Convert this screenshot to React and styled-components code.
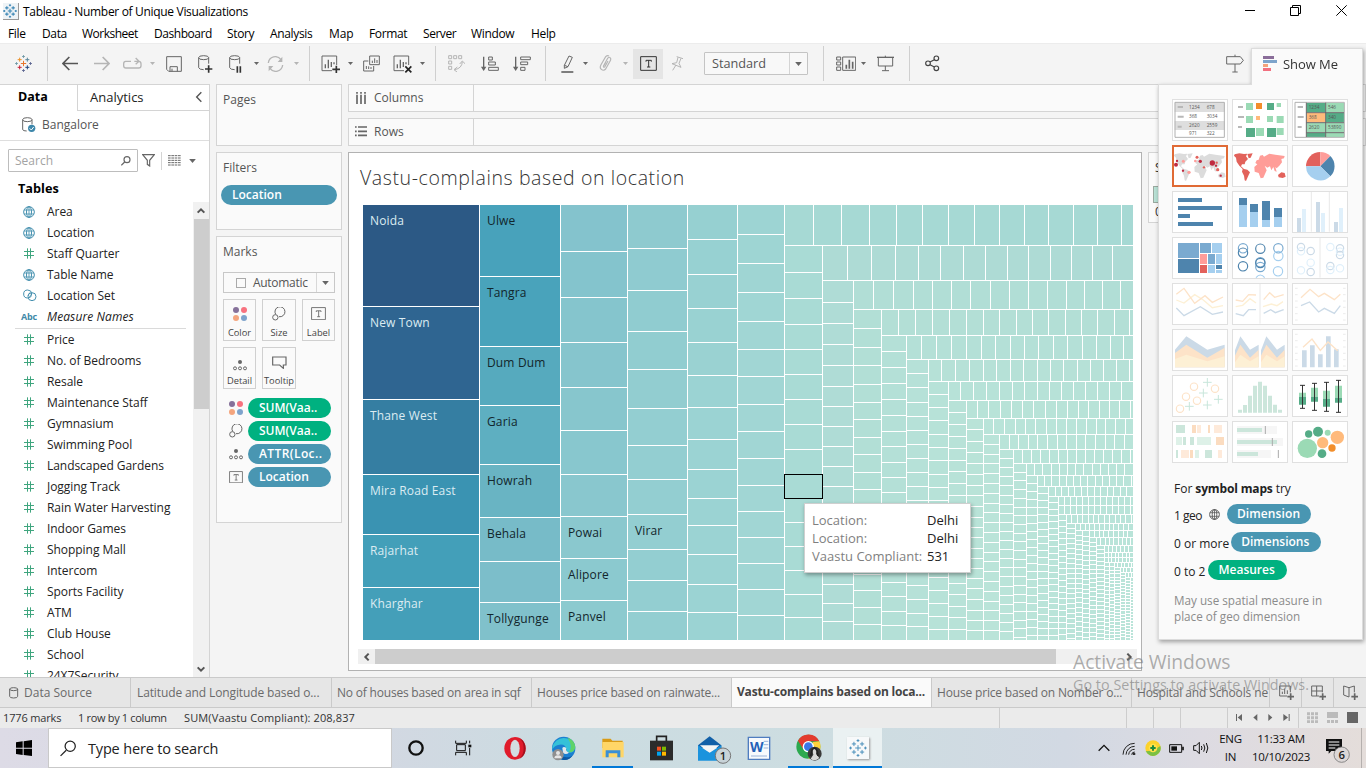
import React from "react";
import styled, { createGlobalStyle, css } from "styled-components";

const Global = createGlobalStyle`
  * { box-sizing: border-box; }
  body { margin: 0; overflow: hidden; background: #fff; }
  #root { width: 1366px; height: 768px; }
  svg { display: block; flex: none; }
`;

const Screen = styled.div`
  position: relative;
  width: 1366px;
  height: 768px;
  display: flex;
  flex-direction: column;
  overflow: hidden;
  background: #f4f4f4;
  font-family: "Open Sans", "Noto Sans", sans-serif;
  font-size: 12px;
  color: #333;
  white-space: nowrap;
`;

/* ---------- generic drawing: coordinates are thirds of a pixel ---------- */
const Art = ({ w, h, children, ...rest }) => (
  <svg width={w} height={h} viewBox={`0 0 ${w * 3} ${h * 3}`} fill="none" {...rest}>
    {children}
  </svg>
);

/* ---------- title bar and menu ---------- */
const TitleBar = styled.header`
  height: 24px;
  display: flex;
  align-items: center;
  padding: 0 0 2px 3px;
  background: #fff;
  color: #000;
`;
const TitleText = styled.span`
  margin-left: 4px;
  flex: 1;
  font-size: 12px;
  letter-spacing: -0.32px;
`;
const WindowButtons = styled.div`
  display: flex;
  gap: 35px;
  align-items: center;
  padding: 0 19px 2px 0;
`;
const MenuBar = styled.nav`
  height: 19px;
  display: flex;
  align-items: center;
  background: #fff;
  color: #000;
  padding-left: 8px;
`;
const MenuItem = styled.span`
  width: ${(p) => p.$w}px;
  font-size: 12px;
  letter-spacing: ${(p) => p.$ls || -0.35}px;
`;

/* ---------- toolbar ---------- */
const Toolbar = styled.div`
  height: 41px;
  display: flex;
  align-items: center;
  padding-bottom: 1px;
  background: #f4f4f4;
  border-top: 1px solid #ececec;
`;
const Tool = styled.span`
  width: ${(p) => p.$w}px;
  margin-left: ${(p) => p.$gap}px;
  flex: none;
  display: flex;
  justify-content: center;
`;
const Divider = styled.span`
  width: 1px;
  height: 35px;
  margin-left: ${(p) => p.$gap}px;
  background: #cfcfcf;
`;
const ActiveTool = styled(Tool)`
  height: 30px;
  align-items: center;
  background: #e5e5e5;
`;
const FitSelect = styled.div`
  width: 104px;
  height: 23px;
  margin-left: 20px;
  display: flex;
  align-items: center;
  border: 1px solid #c4c4c4;
  border-radius: 1px;
  background: #f8f8f8;
  color: #555;
  font-size: 12.7px;
`;
const FitLabel = styled.span`
  flex: 1;
  padding: 0 0 1px 7px;
`;
const FitArrow = styled.span`
  width: 18px;
  height: 21px;
  border-left: 1px solid #d4d4d4;
  display: flex;
  align-items: center;
  justify-content: center;
`;
const CaretBox = styled.span`
  margin-left: ${(p) => p.$gap || 0}px;
  flex: none;
`;
const Caret = ({ gap, s = 5, c = "#666" }) => (
  <CaretBox $gap={gap}>
    <svg width={s} height={Math.ceil(s / 2)} viewBox="0 0 10 6">
      <path d="M0 0H10L5 6Z" fill={c} />
    </svg>
  </CaretBox>
);

/* ---------- body ---------- */
const Body = styled.main`
  height: 593px;
  display: flex;
`;
const DataPane = styled.section`
  width: 210px;
  display: flex;
  flex-direction: column;
  background: #fff;
  border-right: 1px solid #d4d4d4;
  border-top: 1px solid #d4d4d4;
`;
const PaneTabs = styled.div`
  height: 26px;
  display: flex;
  color: #222;
`;
const DataTab = styled.div`
  width: 77px;
  padding: 3px 0 0 18px;
  font-weight: 700;
  font-size: 12.5px;
  color: #000;
`;
const AnalyticsTab = styled.div`
  flex: 1;
  display: flex;
  justify-content: space-between;
  padding: 3px 3px 0 12px;
  border-left: 1px solid #d4d4d4;
  border-bottom: 1px solid #d4d4d4;
  font-size: 13px;
  line-height: 18px;
`;
const TabArrow = styled.span`
  padding-top: 2px;
`;
const SourceRow = styled.div`
  height: 30px;
  display: flex;
  align-items: center;
  gap: 6px;
  padding: 0 0 2px 22px;
  border-bottom: 1px solid #dedede;
  color: #555;
`;
const SearchRow = styled.div`
  display: flex;
  align-items: center;
  height: 23px;
  margin: 8px 0 0 8px;
`;
const SearchField = styled.div`
  width: 130px;
  height: 23px;
  display: flex;
  align-items: center;
  justify-content: space-between;
  padding: 0 6px;
  border: 1px solid #bdbdbd;
  border-radius: 1px;
  color: #a3a3a3;
`;
const SmallDivider = styled.span`
  width: 1px;
  height: 18px;
  margin: 0 6px;
  background: #d4d4d4;
`;
const TablesTitle = styled.h3`
  margin: 7px 0 4px 18px;
  height: 19px;
  line-height: 19px;
  font-size: 12.7px;
  font-weight: 700;
  color: #000;
`;
const FieldArea = styled.div`
  flex: 1;
  min-height: 0;
  display: flex;
`;
const FieldList = styled.div`
  flex: 1;
  overflow: hidden;
`;
const FieldRow = styled.div`
  height: 21px;
  display: flex;
  align-items: center;
  padding-bottom: 2px;
  color: #222;
  font-style: ${(p) => (p.$italic ? "italic" : "normal")};
  letter-spacing: ${(p) => (p.$italic ? 0.1 : -0.05)}px;
`;
const FieldIcon = styled.span`
  width: 24px;
  margin-left: 23px;
  display: flex;
  flex: none;
  align-items: center;
`;
const AbcIcon = styled.b`
  margin-left: -2px;
  font-size: 9px;
  font-style: normal;
  color: #4189a8;
  letter-spacing: -0.2px;
`;
const FieldRule = styled.div`
  height: 1px;
  margin: 0 7px 1px 15px;
  background: #dadada;
`;
const VScroll = styled.div`
  width: 16px;
  display: flex;
  flex-direction: column;
  align-items: center;
  background: #f1f1f1;
`;
const ScrollButton = styled.span`
  width: 17px;
  height: 17px;
  display: flex;
  align-items: center;
  justify-content: center;
`;
const VThumb = styled.div`
  width: 15px;
  height: 190px;
  background: #cdcdcd;
`;
const Spacer = styled.div`
  flex: 1;
`;

/* ---------- cards ---------- */
const CardColumn = styled.section`
  width: 126px;
  margin-left: 6px;
  display: flex;
  flex-direction: column;
  gap: 6px;
`;
const Card = styled.div`
  height: ${(p) => p.$h}px;
  border: 1px solid #d4d4d4;
  background: #fafafa;
`;
const CardTitle = styled.div`
  height: 32px;
  padding: 6px 0 0 6px;
  line-height: 18px;
  color: #555;
`;
const Pill = styled.span`
  height: 20px;
  width: ${(p) => p.$w}px;
  padding-left: ${(p) => p.$pl || 11}px;
  padding-bottom: 1px;
  display: inline-flex;
  align-items: center;
  border-radius: 10px;
  background: ${(p) => (p.$green ? "#00b180" : "#4996b2")};
  color: #fff;
  font-weight: 600;
  font-size: 12px;
  letter-spacing: ${(p) => p.$ls || 0}px;
  flex: none;
`;
const FilterPill = styled(Pill)`
  margin-left: 4px;
`;
const MarkType = styled.div`
  height: 21px;
  width: 112px;
  margin: 3px 0 6px 6px;
  display: flex;
  align-items: center;
  border: 1px solid #c8c8c8;
  color: #555;
  letter-spacing: -0.3px;
`;
const MarkSquare = styled.i`
  width: 10px;
  height: 10px;
  margin: 0 7px 0 12px;
  border: 1px solid #aaa;
`;
const MarkArrow = styled.span`
  width: 18px;
  height: 19px;
  display: flex;
  align-items: center;
  justify-content: center;
  border-left: 1px solid #d8d8d8;
`;
const MarkGrid = styled.div`
  display: grid;
  grid-template-columns: 33px 34px 33px;
  grid-auto-rows: 42px;
  gap: 6px 6px;
  margin-left: 6px;
`;
const MarkButton = styled.div`
  border: 1px solid #d0d0d0;
  display: flex;
  flex-direction: column;
  align-items: center;
  justify-content: space-between;
  padding: 7px 0 1px;
  font-size: 9.3px;
  line-height: 13px;
  color: #444;
`;
const PillList = styled.div`
  display: flex;
  flex-direction: column;
  gap: 3px;
  margin: 9px 0 0 12px;
`;
const PillRow = styled.div`
  display: flex;
  align-items: center;
`;
const PillIcon = styled.span`
  width: 19px;
  display: flex;
  align-items: center;
`;

/* ---------- worksheet ---------- */
const Work = styled.section`
  flex: 1;
  min-width: 0;
  margin-left: 6px;
  display: flex;
  flex-direction: column;
  gap: 6px;
`;
const Shelf = styled.div`
  height: 28px;
  display: flex;
  border: 1px solid #d4d4d4;
  background: #fafafa;
  color: #555;
`;
const ShelfName = styled.div`
  width: 125px;
  display: flex;
  align-items: center;
  gap: 7px;
  padding: 0 0 1px ${(p) => p.$pl}px;
  border-right: 1px solid #d4d4d4;
`;
const SheetRow = styled.div`
  display: flex;
  gap: 6px;
`;
const Sheet = styled.div`
  position: relative;
  width: 794px;
  height: 519px;
  flex: none;
  display: flex;
  flex-direction: column;
  border: 1px solid #b2b2b2;
  background: #fff;
`;
const SheetTitle = styled.h1`
  margin: 0;
  height: 52px;
  padding-left: 11px;
  line-height: 49px;
  font-size: 19.5px;
  font-weight: 300;
  letter-spacing: 0.6px;
  color: #333;
`;
const ChartBox = styled.div`
  margin-left: 14px;
`;
const HScroll = styled.div`
  width: 779px;
  height: 15px;
  margin: 9px 0 0 9px;
  display: flex;
  align-items: center;
  background: #f0f0f0;
`;
const HThumb = styled.div`
  width: 681px;
  height: 15px;
  background: #cdcdcd;
`;
const HintBox = styled.div`
  position: absolute;
  left: 455px;
  top: 350px;
  width: 167px;
  height: 70px;
  padding: 8px 0 0 7px;
  display: grid;
  grid-template-columns: 115px 1fr;
  grid-auto-rows: 18px;
  line-height: 17px;
  background: #fff;
  border: 1px solid #cfcfcf;
  box-shadow: 1px 2px 4px rgba(0, 0, 0, 0.35);
  font-size: 13px;
  color: #7f7f7f;
`;
const HintValue = styled.span`
  color: #222;
  font-weight: 500;
`;
const Legend = styled.div`
  width: 120px;
  height: 71px;
  border: 1px solid #d4d4d4;
  background: #fafafa;
  padding: 6px 0 0 6px;
`;
const LegendRamp = styled.div`
  height: 17px;
  margin: 10px 0 0 -2px;
  background: #b9e2d6;
  border: 1px solid #9aa99f;
`;

/* ---------- Show Me ---------- */
const ShowMe = styled.aside`
  position: absolute;
  left: 1158px;
  top: 48px;
  width: 205px;
  display: flex;
  flex-direction: column;
  align-items: flex-end;
  filter: drop-shadow(1px 2px 2px rgba(0, 0, 0, 0.35));
`;
const ShowMeTab = styled.div`
  width: 112px;
  height: 37px;
  display: flex;
  align-items: center;
  gap: 5px;
  padding: 0 0 7px 11px;
  margin-bottom: -1px;
  border: 1px solid #dcdcdc;
  border-bottom: 0;
  background: #fafafa;
  font-size: 13px;
  color: #333;
  letter-spacing: -0.05px;
  z-index: 1;
`;
const ShowMeBody = styled.div`
  width: 205px;
  height: 556px;
  padding: 14px 0 0 13px;
  border: 1px solid #dcdcdc;
  background: #fafafa;
`;
const ThumbGrid = styled.div`
  display: grid;
  grid-template-columns: repeat(3, 56px);
  grid-auto-rows: 42px;
  gap: 4px;
`;
const Thumb = styled.div`
  background: #fff;
  border: ${(p) => (p.$on ? "2px solid #e06a35" : "1px solid #e0e0e0")};
  overflow: hidden;
  > svg { margin: ${(p) => (p.$on ? "-2px" : "-1px")}; }
`;
const Needs = styled.div`
  display: flex;
  flex-direction: column;
  margin: 17px 0 0 2px;
  color: #222;
`;
const NeedsLine = styled.div`
  height: ${(p) => p.$h || 28}px;
  display: flex;
  align-items: center;
  gap: ${(p) => p.$gap || 0}px;
  letter-spacing: ${(p) => p.$ls || 0}px;
  b { margin: 0 3px; font-weight: 700; letter-spacing: -0.15px; }
`;
const NeedsText = styled.span`
  padding-top: 3px;
`;
const NeedsNote = styled.p`
  margin: 5px 0 0;
  line-height: 16px;
  font-size: 11.7px;
  color: #8b8b8b;
`;

/* ---------- sheet tabs and status ---------- */
const SheetTabs = styled.div`
  height: 31px;
  display: flex;
  border-top: 1px solid #cacaca;
  border-bottom: 1px solid #cacaca;
  background: #e6e6e6;
  color: #6a6a6a;
`;
const SheetTab = styled.div`
  width: ${(p) => p.$w}px;
  flex: none;
  overflow: hidden;
  display: flex;
  align-items: center;
  gap: 5px;
  padding-left: ${(p) => p.$pl || 6}px;
  border-right: 1px solid #cacaca;
  letter-spacing: ${(p) => (p.$ls === undefined ? -0.12 : p.$ls)}px;
  ${(p) =>
    p.$on &&
    css`
      background: #fafafa;
      color: #444;
      font-weight: 700;
      padding-bottom: 2px;
    `}
`;
const StatusBar = styled.div`
  height: 20px;
  display: flex;
  align-items: center;
  padding-left: 3px;
  background: #ebebeb;
  color: #333;
  font-size: 11px;
`;
const StatusText = styled.span`
  width: ${(p) => p.$w}px;
  padding-bottom: 2px;
  letter-spacing: ${(p) => p.$ls || 0}px;
`;
const StatusCell = styled.span`
  width: ${(p) => p.$w}px;
  height: 20px;
  display: flex;
  align-items: center;
  justify-content: ${(p) => p.$j || "flex-start"};
  padding: 0 ${(p) => p.$p || 0}px 1px;
  border-left: 1px solid #cdcdcd;
`;

/* ---------- taskbar ---------- */
const Taskbar = styled.footer`
  height: 40px;
  display: flex;
  background: linear-gradient(90deg, #dddbe6 0%, #d2d8e2 28%, #cbdce1 42%, #cddde1 62%, #d2d9e3 78%, #dddbe2 88%, #e4ddda 100%);
  color: #111;
`;
const StartButton = styled.div`
  width: 48px;
  display: flex;
  align-items: center;
  justify-content: center;
`;
const TaskSearch = styled.div`
  width: 344px;
  display: flex;
  align-items: center;
  gap: 11px;
  padding-left: 11px;
  background: #fff;
  border: 1px solid #c9c9c9;
  font-size: 14.5px;
  letter-spacing: -0.17px;
  color: #222;
`;
const AppButton = styled.div`
  width: 49px;
  display: flex;
  align-items: center;
  justify-content: center;
  padding-right: ${(p) => p.$shift || 0}px;
  background: ${(p) => (p.$active ? "#eaf1f2" : "transparent")};
  box-shadow: ${(p) => (p.$open ? "inset 0 -2px 0 #0078d7" : "none")};
`;
const OpenApp = styled(AppButton)`
  width: 41px;
  margin: 0 4px;
`;
const Tray = styled.div`
  margin-left: auto;
  display: flex;
  align-items: center;
`;
const TrayItem = styled.span`
  width: ${(p) => p.$w}px;
  display: flex;
  justify-content: center;
`;
const TrayText = styled.div`
  width: ${(p) => p.$w}px;
  padding-bottom: 1px;
  text-align: center;
  font-size: 11.5px;
  line-height: 18px;
  letter-spacing: ${(p) => p.$ls || -0.3}px;
`;
const PeekEdge = styled.span`
  width: 5px;
  height: 40px;
  border-left: 1px solid #b5b0ae;
`;

const Watermark = styled.div`
  position: absolute;
  left: 1073px;
  top: 649px;
  color: rgba(120, 120, 120, 0.6);
  font-size: 14.3px;
  line-height: 20px;
  letter-spacing: 0.05px;
  pointer-events: none;
`;
const WatermarkTitle = styled.div`
  font-size: 19.3px;
  line-height: 26px;
  letter-spacing: -0.05px;
`;

/* ---------- icons ---------- */
const G = "#666";
const L = "#b5b5b5";

const plus = (x, y, r) => `M${x - r} ${y}h${2 * r}M${x} ${y - r}v${2 * r}`;

const TableauMark = ({ size, colors, sw = 3 }) => (
  <svg width={size} height={size} viewBox="0 0 51 51" fill="none" strokeWidth={sw}>
    <path d={plus(25.5, 25.5, 8)} stroke={colors[0]} />
    <path d={plus(14, 14, 6)} stroke={colors[1]} />
    <path d={plus(37, 14, 6)} stroke={colors[2]} />
    <path d={plus(14, 37, 6)} stroke={colors[3]} />
    <path d={plus(37, 37, 6)} stroke={colors[4]} />
    <path d={plus(25.5, 4.5, 4)} stroke={colors[5]} />
    <path d={plus(25.5, 46.5, 4)} stroke={colors[6]} />
    <path d={plus(4.5, 25.5, 4)} stroke={colors[5]} />
    <path d={plus(46.5, 25.5, 4)} stroke={colors[6]} />
  </svg>
);
const BLUES = Array(7).fill("#3b86b5");
const MULTI = ["#e8762c", "#eb9129", "#5b879b", "#c72037", "#1f447e", "#7099a6", "#5c6692"];

const AppIcon = styled.span`
  padding: 1px 1px 1px 0;
  background: #eef3f6;
  border-right: 1px solid #999;
  border-bottom: 1px solid #999;
`;

const Arrow = ({ c, flip }) => (
  <Art w={16} h={15} stroke={c} strokeWidth="5" transform={flip ? "scale(-1,1)" : undefined}>
    <path d="M3 22.500H48M22 3L3 22.500L22 42" />
  </Art>
);
const Replay = () => (
  <Art w={19} h={14} stroke={L} strokeWidth="4">
    <path d="M24 13H8Q2 13 2 20V26Q2 33 9 33H47Q54 33 54 26V20Q54 13 47 13H34M38 3L48 13L38 22" />
  </Art>
);
const Save = () => (
  <Art w={16} h={16} stroke={G} strokeWidth="3">
    <path d="M2 2H46V46H8L2 40ZM12 46V32H34V46M18 38V46" />
  </Art>
);
const CYL = "M2 8Q2 2 17 2T32 8Q32 14 17 14T2 8V38Q4 44 17 44M32 8V26";
const AddData = () => (
  <Art w={15} h={18} stroke={G} strokeWidth="3">
    <path d={CYL} />
    <path d="M21 42H43M32 31V53" stroke="#333" strokeWidth="5" />
  </Art>
);
const PauseData = () => (
  <Art w={14} h={18} stroke={G} strokeWidth="3">
    <path d={CYL} />
    <path d="M25 34V53M34 34V53" stroke="#333" strokeWidth="5" />
  </Art>
);
const Refresh = () => (
  <Art w={17} h={16} stroke={L} strokeWidth="4">
    <path d="M4 21A21 21 0 0 1 42 11M47 27A21 21 0 0 1 9 37" />
    <path d="M46 2V18H32ZM5 46V30H19Z" fill={L} stroke="none" />
  </Art>
);
const NewSheet = ({ del }) => (
  <Art w={19} h={19} stroke={G} strokeWidth="3" transform="translate(0,1)">
    <path d="M47 30V3H3V47H33" />
    <path d="M13 40V28M22 40V14M31 36V21M39 28V22" strokeWidth="4" />
    {del ? (
      <path d="M37 34L55 52M55 34L37 52" stroke="#222" strokeWidth="5" />
    ) : (
      <path d="M34 43H57M46 32V54" stroke="#333" strokeWidth="5" />
    )}
  </Art>
);
const Duplicate = () => (
  <Art w={17} h={17} stroke={G} strokeWidth="3">
    <path d="M20 3H49V29H20ZM16 18H2V48H32V33" />
    <path d="M28 24V17M35 24V10M42 24V15M10 42V33M17 42V34M24 42V36" />
  </Art>
);
const Swap = () => (
  <Art w={18} h={17} stroke={L} strokeWidth="3">
    <path d="M2 2h9v9h-9zM17 2h9v9h-9zM32 2h9v9h-9zM2 18h9v9h-9zM2 34h9v9h-9zM20 44Q42 40 43 20M28 36L18 44L27 51M35 27L43 18L51 26" />
  </Art>
);
const SortIcon = ({ desc }) => (
  <Art w={18} h={16} stroke={G} strokeWidth="3">
    <path d="M8 2V38" strokeWidth="4" />
    <path d="M0 32H16L8 45Z" fill={G} stroke="none" />
    {desc ? (
      <path d="M23 3H52V11H23ZM23 18H44V26H23ZM23 34H36V43H23Z" />
    ) : (
      <path d="M23 3H34V12H23ZM23 18H43V27H23ZM23 34H52V43H23Z" />
    )}
  </Art>
);
const Highlighter = () => (
  <Art w={14} h={18} stroke={G} strokeWidth="3">
    <path d="M10 31L24 3L34 7L21 35L10 40ZM10 31L21 35" />
    <path d="M1 51H37" strokeWidth="5" />
  </Art>
);
const Clip = () => (
  <Art w={13} h={17} stroke={L} strokeWidth="3.500">
    <path d="M13 34L26 10Q30 4 34 9Q37 12 33 19L20 42Q14 49 7 43Q1 38 6 29L20 5Q25 0 30 3M20 22L13 34Q13 38 17 36L27 18" />
  </Art>
);
const TextBox = ({ s = 17, c = "#333" }) => (
  <svg width={s} height={(s * 15) / 17} viewBox="0 0 51 45" fill="none" stroke={c} strokeWidth="3">
    <path d="M2 2H49V43H2ZM18 17V13H34V17M26 13V33M21 33H31" />
  </svg>
);
const Pin = () => (
  <Art w={13} h={16} stroke={L} strokeWidth="3">
    <path d="M17 2L36 8M21 4L17 20L3 23L30 34L24 22L30 7M15 27L5 43" />
  </Art>
);
const FitChart = () => (
  <Art w={20} h={16} stroke={G} strokeWidth="3">
    <path d="M2 3h12v9H2zM2 18h12v9H2zM2 33h12v10H2zM20 3H59V43H20Z" />
    <path d="M31 38V26M40 38V11M50 38V17" strokeWidth="5" />
  </Art>
);
const Present = () => (
  <Art w={17} h={17} stroke={G} strokeWidth="3">
    <path d="M0 7H51" strokeWidth="4" />
    <path d="M4 8V33H47V8M25 2V6M25 33V47M15 47H36" />
  </Art>
);
const Share = () => (
  <Art w={15} h={17} stroke="#444" strokeWidth="3.500">
    <circle cx="9" cy="25" r="7" />
    <circle cx="34" cy="10" r="7" />
    <circle cx="34" cy="40" r="7" />
    <path d="M15 21L28 14M15 29L28 36" />
  </Art>
);
const Sign = () => (
  <Art w={18} h={19} stroke={G} strokeWidth="3">
    <path d="M2 8H43L52 19L43 30H2ZM27 8V2M27 30V54M19 54H35" />
  </Art>
);
const ShowMeLogo = () => (
  <Art w={15} h={15}>
    <path fill="#8a6d99" d="M0 0h33v9H0z" />
    <path fill="#7da4cb" d="M0 12h42v9H0z" />
    <path fill="#f3a27a" d="M0 24h15v9H0z" />
    <path fill="#f2707f" d="M0 36h24v9H0z" />
  </Art>
);
const Globe = ({ c = "#4590af", s = 12 }) => (
  <svg width={s} height={s} viewBox="0 0 36 36" fill="none" stroke={c} strokeWidth="3">
    <circle cx="18" cy="18" r="16" />
    <ellipse cx="18" cy="18" rx="7.500" ry="16" />
    <path d="M18 2V34M3 12H33M3 24H33" strokeWidth="2.500" />
  </svg>
);
const Hash = () => (
  <Art w={11} h={11} stroke="#3fa57e" strokeWidth="3">
    <path d="M13.500 1V32M22.500 1V32M3 10.500H33M3 22.500H33" />
  </Art>
);
const SetIcon = () => (
  <Art w={14} h={13} stroke="#4590af" strokeWidth="3">
    <circle cx="14" cy="15" r="12" />
    <circle cx="27" cy="23" r="12" />
    <path d="M18 25L27 13M14 20L21 10" strokeWidth="2" />
  </Art>
);
const SourceIcon = () => (
  <Art w={14} h={16} stroke={G} strokeWidth="3">
    <path d="M2 8Q2 2 16 2T30 8Q30 14 16 14T2 8V38Q4 42 14 42M30 8V22" />
    <circle cx="29" cy="34" r="11" fill="#3d87ab" stroke="none" />
    <path d="M23 34L28 39L35 30" stroke="#fff" />
  </Art>
);
const Lens = ({ s = 10, c = G, w = 3.5 }) => (
  <svg width={s} height={s} viewBox="0 0 30 30" fill="none" stroke={c} strokeWidth={w}>
    <circle cx="18" cy="11" r="9" />
    <path d="M11 18L1 28" />
  </svg>
);
const Funnel = () => (
  <Art w={13} h={13} stroke={G} strokeWidth="3.500">
    <path d="M2 2H37L23 19V36L16 31V19Z" />
  </Art>
);
const Rows4 = () => (
  <Art w={13} h={11} stroke={G} strokeWidth="3" strokeDasharray="8 2">
    <path d="M0 2H38M0 9H38M0 16H38M0 23H38M0 30H38" />
  </Art>
);
const Chevron = ({ d, c = "#555", w = 12, s = 3 }) => (
  <svg width={w} height={w} viewBox="0 0 12 12" fill="none" stroke={c} strokeWidth={s}>
    <path
      d={{ up: "M2 8L6 4L10 8", down: "M2 4L6 8L10 4", left: "M8 2L4 6L8 10", right: "M4 2L8 6L4 10" }[d]}
    />
  </svg>
);
const Dots4 = () => (
  <Art w={14} h={14}>
    <circle cx="9" cy="9" r="9" fill="#86719a" />
    <circle cx="33" cy="9" r="9" fill="#f8727f" />
    <circle cx="9" cy="33" r="9" fill="#f4a57e" />
    <circle cx="33" cy="33" r="9" fill="#7ea3cc" />
  </Art>
);
const SizeIcon = () => (
  <Art w={14} h={14} stroke={G} strokeWidth="3">
    <path d="M11 22A15 15 0 1 1 21 29" />
    <circle cx="10" cy="31" r="8" />
  </Art>
);
const DetailIcon = () => (
  <Art w={14} h={11} stroke={G} strokeWidth="3">
    <circle cx="21" cy="6" r="6" fill={G} stroke="none" />
    <circle cx="6" cy="25" r="4.500" />
    <circle cx="21" cy="25" r="4.500" />
    <circle cx="36" cy="25" r="4.500" />
  </Art>
);
const TooltipIcon = () => (
  <Art w={15} h={14} stroke={G} strokeWidth="3.500">
    <path d="M2 6H42V30H34V40L23 30H2Z" />
  </Art>
);
const ColumnsIcon = () => (
  <Art w={11} h={12} stroke={G} strokeWidth="5">
    <path d="M3 0V5M3 8V36M15 0V5M15 8V36M27 0V5M27 8V36" />
  </Art>
);
const RowsIcon = () => (
  <Art w={12} h={11} stroke={G} strokeWidth="5">
    <path d="M0 3H5M9 3H36M0 16H5M9 16H36M0 28H5M9 28H36" />
  </Art>
);

/* ---------- treemap ---------- */
const RIGHT = 1133;
const BOTTOM = 640;

const evenly = (from, to, pitch) => {
  const out = [];
  for (let k = 1; from + k * pitch < to - 1; k++) out.push(Math.round(from + k * pitch));
  return out;
};
const rowCells = (x0, y0, y1, seps, fill) => {
  const xs = [x0 - 1, ...seps, RIGHT];
  return xs.slice(1).map((x, i) => ({ x: xs[i] + 1, y: y0, w: x - xs[i] - 1, h: y1 - y0, fill }));
};
const columnCells = (x0, x1, y0, seps, fill) => {
  const ys = [y0 - 1, ...seps, BOTTOM];
  return ys.slice(1).map((y, i) => ({
    x: x0,
    y: ys[i] + 1,
    w: x1 - x0,
    h: y - ys[i] - 1,
    fill: Array.isArray(fill) ? fill[Math.min(i, fill.length - 1)] : fill,
  }));
};

const BIG_COLUMNS = [
  [363, 479, [306, 399, 474, 534, 587], ["#2c5985", "#2f6591", "#357ea2", "#3a93b2", "#439fb9", "#449fb9"]],
  [480, 560, [276, 346, 405, 464, 517, 561, 602], ["#48a2bb", "#49a3bb", "#56aabe", "#5eafc1", "#69b4c3", "#77bbc8", "#7cbeca", "#80c1cb"]],
  [561, 627, [251, 297, 342, 387, 430, 474, 516, 558, 600], ["#84c3cd", "#84c4cd", "#85c5cd", "#86c5cd", "#87c6cd", "#88c7ce", "#89c7ce", "#8ac8ce", "#8bc9cf", "#8ccacf"]],
  [628, 687, [248, 290, 331, 369, 408, 445, 479, 514, 549, 580, 611], ["#8ecacf", "#8fcbd0", "#90ccd0", "#91cdd0", "#92cdd0", "#93ced1"]],
  [688, 737, [239, 274, 308, 342, 375, 407, 439, 469, 498, 525, 554, 584, 612], ["#96d0d1", "#97d1d2", "#98d1d2", "#99d2d2", "#9ad2d2", "#9bd3d3"]],
  [738, 784, [234, 263, 292, 321, 349, 376, 404, 431, 458, 485, 511, 537, 563, 589, 615], ["#9dd4d3", "#9ed5d3", "#9fd5d3", "#a0d6d4", "#a1d6d4"]],
];

const STEPS = [
  { x: 785, y: 205, y1: 245, cx: 822, c: "#a6d9d4", cc: "#a9dbd5",
    r: [813, 841, 869, 896, 922, 948, 974, 999, 1024, 1048, 1073, 1097, 1121],
    k: [272, 298, 324, 349, 374, 399, 424, 449, 474, 498, 522, 546, 570, 594, 617] },
  { x: 823, y: 246, y1: 280, cx: 853, c: "#aedbd5", cc: "#afdcd6",
    r: [847, 871, 895, 918, 940, 963, 985, 1007, 1028, 1050, 1071, 1092, 1112],
    k: [302, 323, 344, 365, 386, 406, 426, 446, 466, 486, 506, 525, 545, 564, 584, 603, 621] },
  { x: 854, y: 281, y1: 309, cx: 881, c: "#b1ded6", cc: "#b2dfd6",
    r: [873, 893, 913, 932, 951, 970, 990, 1009, 1028, 1047, 1066, 1084, 1102, 1120],
    k: [328, 347, 365, 384, 402, 419, 437, 454, 472, 489, 506, 523, 540, 557, 574, 590, 607, 624] },
  { x: 882, y: 310, y1: 335, cx: 906, c: "#b3dfd6", cc: "#b4e0d7",
    r: [898, 915, 932, 949, 966, 983, 999, 1016, 1032, 1048, 1065, 1081, 1097, 1114, 1129],
    k: [351, 367, 383, 399, 415, 431, 446, 462, 477, 492, 507, 522, 537, 552, 567, 582, 596, 611, 625] },
  { x: 907, y: 336, y1: 359, cx: 928, c: "#b4e0d7", cc: "#b6e1d8",
    r: [921, 936, 951, 966, 981, 995, 1010, 1024, 1038, 1053, 1067, 1082, 1096, 1110, 1123],
    k: [373, 387, 402, 416, 430, 444, 458, 472, 486, 500, 514, 529, 543, 557, 571, 585, 599, 613, 626] },
  { x: 929, y: 360, y1: 381, cx: 948, c: "#b6e1d7", cc: "#b7e2d8",
    r: [941, 955, 969, 983, 996, 1010, 1023, 1037, 1050, 1063, 1077, 1090, 1103, 1116, 1129],
    k: [394, 407, 420, 434, 447, 460, 474, 487, 500, 513, 526, 539, 552, 564, 577, 590, 603, 616, 629] },
  { x: 949, y: 382, y1: 400, cx: 966, c: "#b7e2d8", cc: "#b8e2d8",
    r: [960, 973, 986, 999, 1012, 1024, 1037, 1049, 1061, 1073, 1085, 1097, 1109, 1121],
    k: [412, 424, 436, 448, 460, 471, 483, 495, 506, 517, 528, 539, 550, 561, 572, 583, 594, 606, 617, 629] },
  { x: 967, y: 401, y1: 418, cx: 983, c: "#b8e3d8", cc: "#b9e3d8",
    r: [977, 988, 1000, 1011, 1022, 1033, 1045, 1056, 1067, 1078, 1088, 1099, 1109, 1119, 1130],
    k: [429, 441, 452, 463, 474, 485, 495, 506, 517, 527, 537, 548, 558, 568, 578, 588, 599, 610, 620, 630] },
  { x: 984, y: 419, y1: 434, cx: 999, r: [993, 1004, 1015, 1025, 1035, 1046, 1056, 1066, 1076, 1086, 1096, 1105, 1115, 1125], kp: 9.8 },
  { x: 1000, y: 435, y1: 449, cx: 1013, rp: 9.6, kp: 9.1 },
  { x: 1014, y: 450, y1: 463, cx: 1026, rp: 9, kp: 8.7 },
  { x: 1027, y: 464, y1: 475, cx: 1037, rp: 8.2, kp: 8 },
  { x: 1038, y: 476, y1: 486, cx: 1048, rp: 7.2, kp: 7.1 },
  { x: 1049, y: 487, y1: 496, cx: 1058, rp: 6.5, kp: 6.3 },
  { x: 1059, y: 497, y1: 505, rp: 6 },
  { x: 1059, y: 506, y1: 514, cx: 1066, rp: 6, kp: 6 },
  { x: 1067, y: 515, y1: 523, cx: 1075, rp: 5.4, kp: 5 },
  { x: 1076, y: 524, y1: 530, cx: 1082, rp: 4.8, kp: 4.8 },
  { x: 1083, y: 531, y1: 531, cx: 1089, rp: 90, kp: 4.8 },
  { x: 1090, y: 531, y1: 537, cx: 1096, rp: 4.8, kp: 4.5 },
  { x: 1097, y: 538, y1: 545, cx: 1104, rp: 4.3, kp: 4 },
  { x: 1105, y: 546, y1: 552, rp: 4 },
  { x: 1105, y: 553, y1: 557, rp: 3.6 },
  { x: 1105, y: 558, y1: 562, cx: 1109, rp: 3.6, kp: 4 },
  { x: 1110, y: 563, y1: 563, cx: 1114, rp: 90, kp: 3.4 },
  { x: 1115, y: 563, y1: 567, cx: 1120, rp: 3.4, kp: 3.2 },
  { x: 1121, y: 568, y1: 572, cx: 1125, rp: 3.2, kp: 3.2 },
  { x: 1126, y: 573, y1: 577, cx: 1130, rp: 3.2, kp: 3 },
  { x: 1131, y: 578, y1: 578, cx: 1133, rp: 90, kp: 3 },
];

const CELLS = [
  ...BIG_COLUMNS.flatMap(([x0, x1, seps, fills]) => columnCells(x0, x1, 205, seps, fills)),
  ...STEPS.flatMap((s) => [
    ...(s.y1 > s.y ? rowCells(s.x, s.y, s.y1, s.r || evenly(s.x - 1, RIGHT, s.rp), s.c || "#b9e4d9") : []),
    ...(s.cx ? columnCells(s.x, s.cx, s.y1 > s.y ? s.y1 + 1 : s.y, s.k || evenly(s.y1, BOTTOM, s.kp), s.cc || "#bae4d9") : []),
  ]),
];

const LABELS = [
  ["Noida", 370, 225, 1], ["New Town", 370, 327, 1], ["Thane West", 370, 420, 1],
  ["Mira Road East", 370, 495, 1], ["Rajarhat", 370, 555, 1], ["Kharghar", 370, 608, 1],
  ["Ulwe", 487, 225], ["Tangra", 487, 297], ["Dum Dum", 487, 367], ["Garia", 487, 426],
  ["Howrah", 487, 485], ["Behala", 487, 538], ["Tollygunge", 487, 623],
  ["Powai", 568, 537], ["Alipore", 568, 579], ["Panvel", 568, 621], ["Virar", 635, 535],
];

const ChartLabel = styled.text`
  font-size: 12px;
  letter-spacing: 0.15px;
  fill: ${(p) => (p.$light ? "#dcecf2" : "#12262c")};
`;

const Treemap = () => (
  <svg width="770" height="435" viewBox="363 205 770 435">
    {CELLS.map((c, i) => (
      <rect key={i} x={c.x} y={c.y} width={Math.max(c.w, 0)} height={Math.max(c.h, 0)} fill={c.fill} />
    ))}
    {LABELS.map(([t, x, y, light]) => (
      <ChartLabel key={t} x={x} y={y} $light={light}>{t}</ChartLabel>
    ))}
    <rect x="784.500" y="474.500" width="38" height="24" fill="none" stroke="#000" />
  </svg>
);

/* ---------- Show Me thumbnails ---------- */
const LAND_W =
  "M8 28L22 25L36 27L46 26L42 34L48 42L40 50L38 58L30 58L27 64L36 72L46 74L54 82L50 90L42 108L38 106L36 92L30 80L32 72L22 62L14 50L12 38L6 32ZM46 27L62 25L56 38L50 40Z";
const LAND_E =
  "M70 54L74 46L80 44L84 32L92 30L96 35L112 26L130 29L158 33L156 40L148 42L150 52L142 62L134 70L130 66L134 80L128 78L124 66L118 76L114 64L106 68L98 62L104 76L94 98L86 100L80 84L68 80L67 66L76 58Z";
const LAND_AU = "M138 90L148 82L158 84L161 95L152 99L140 97Z";

const F = ({ d, c }) => <path d={d} fill={c} />;
const S = ({ d, c, w = 4 }) => <path d={d} stroke={c} strokeWidth={w} />;
const box = (x, y, w, h) => `M${x} ${y}h${w}v${h}h${-w}z`;
const ThumbText = styled.text`
  font-size: 14px;
  fill: #555;
`;
const Circles = ({ list, r, c }) => list.map(([x, y, rr], i) => (
  <circle key={i} cx={x} cy={y} r={rr || r} stroke={c} strokeWidth="3.500" />
));
const Discs = ({ list, c }) => list.map(([x, y, r], i) => <circle key={i} cx={x} cy={y} r={r} fill={c} />);

const NAVY = "#4e84ad", SKY = "#a5cfef", PB = "#cbdae7", PSKY = "#e0f0fb", PO = "#fde3c8", PY = "#fdf0d5";
const MG = "#9bdab5", DG = "#55ac87", OR = "#ffba7b", DOR = "#f28e2b", PG = "#cce6db";
const TICKS = "M9 16h8M9 35h8M9 54h8M9 73h8M9 92h8M9 111h8M153 16h8M153 35h8M153 54h8M153 73h8M153 92h8M153 111h8";

const THUMBS = [
  <>
    <F d={box(8, 10, 150, 29) + box(8, 66, 150, 27)} c="#dedede" />
    <S d="M9 10H157V115H9Z" c="#b0b0b0" w="3" />
    <F d={box(17, 21, 16, 6) + box(17, 50, 18, 6) + box(17, 80, 12, 6)} c="#b8b8b8" />
    {[["1234", 51, 31], ["678", 104, 31], ["368", 51, 58], ["3034", 104, 58], ["2620", 51, 85], ["2559", 104, 85], ["971", 51, 109], ["322", 104, 109]].map(([t, x, y]) => (
      <ThumbText key={t} x={x} y={y}>{t}</ThumbText>
    ))}
  </>,
  <>
    <F d={box(18, 21, 15, 6) + box(18, 51, 18, 6) + box(18, 81, 12, 6)} c="#b8b8b8" />
    <F d={box(42, 12, 21, 21) + box(134, 12, 13, 12) + box(42, 51, 21, 21) + box(105, 51, 18, 18) + box(134, 51, 21, 21) + box(72, 87, 24, 24) + box(134, 87, 21, 21)} c={MG} />
    <F d={box(105, 12, 21, 21) + box(42, 87, 27, 27) + box(105, 87, 27, 27)} c={DG} />
    <F d={box(72, 12, 18, 18)} c={DOR} />
    <F d={box(72, 51, 12, 12)} c={OR} />
  </>,
  <>
    <F d={box(44, 12, 56, 27) + box(102, 42, 54, 27) + box(44, 102, 56, 12)} c={DG} />
    <F d={box(102, 12, 54, 27) + box(44, 72, 56, 27) + box(102, 72, 54, 27) + box(102, 102, 54, 12)} c={MG} />
    <F d={box(44, 42, 56, 27)} c={OR} />
    <S d="M9 10H157V115H9Z" c="#b0b0b0" w="3" />
    <S d="M43 11V114M101 11V114M43 41H156M43 71H156M43 101H156" c="#666" w="3" />
    <F d={box(17, 21, 16, 6) + box(17, 51, 18, 6) + box(17, 81, 12, 6)} c="#b8b8b8" />
    {[["1234", 50, 30], ["546", 108, 30], ["368", 50, 60], ["340", 108, 60], ["2620", 50, 90], ["53890", 108, 90]].map(([t, x, y]) => (
      <ThumbText key={t} x={x} y={y}>{t}</ThumbText>
    ))}
  </>,
  <>
    <F d={LAND_W + LAND_E + LAND_AU} c="#dcdcdc" />
    <Discs list={[[12, 59, 6], [15, 48, 3.5], [85, 49, 5], [121, 54, 8], [33, 77, 3.5], [132, 62, 3.5], [146, 92, 3.5]]} c="#c02a40" />
    <Discs list={[[75, 37, 4.5], [96, 67, 3.5], [134, 53, 3.5], [137, 74, 5]]} c="#e2615c" />
    <Discs list={[[34, 49, 4.5], [51, 82, 5], [70, 48, 4]]} c="#ff9d9a" />
  </>,
  <>
    <F d={LAND_W + LAND_AU} c="#e2625b" />
    <F d={LAND_E} c="#ff9d98" />
  </>,
  <>
    <F d="M85 64V21A43 43 0 0 0 42 64Z" c="#e2615c" />
    <F d="M85 64V21A43 43 0 0 1 115 33Z" c="#ff9d9a" />
    <F d="M85 64L115 33A43 43 0 0 1 115 94Z" c={NAVY} />
    <F d="M85 64L115 94A43 43 0 0 1 42 64Z" c={SKY} />
  </>,
  <F d={box(18, 21, 72, 12) + box(18, 45, 132, 12) + box(18, 69, 36, 12) + box(18, 93, 105, 12)} c={NAVY} />,
  <>
    <F d={box(21, 42, 24, 66) + box(54, 63, 24, 45) + box(90, 87, 24, 21) + box(126, 78, 24, 30)} c={SKY} />
    <F d={box(21, 21, 24, 21) + box(54, 39, 24, 24) + box(90, 30, 24, 57) + box(126, 51, 24, 27)} c={NAVY} />
  </>,
  <>
    <S d="M58 3V122M112 3V122" c="#e8e8e8" w="3" />
    <F d={box(15, 81, 12, 42) + box(72, 33, 12, 90) + box(126, 93, 12, 30)} c={PB} />
    <F d={box(30, 54, 12, 69) + box(87, 66, 12, 57) + box(141, 51, 12, 72)} c={PSKY} />
  </>,
  <>
    <F d={box(18, 18, 63, 45) + box(84, 18, 33, 30) + box(108, 51, 21, 30)} c="#7aaad0" />
    <F d={box(18, 66, 63, 42) + box(132, 84, 18, 12)} c={NAVY} />
    <F d={box(120, 18, 30, 30) + box(132, 51, 18, 30) + box(108, 84, 21, 24) + box(132, 99, 18, 9)} c={SKY} />
    <F d={box(84, 51, 21, 30)} c="#ff9d9a" />
    <F d={box(84, 84, 21, 24)} c="#e2615c" />
  </>,
  <>
    <Circles r={14} c="#7aaad0" list={[[33, 34], [85, 76], [85, 90], [139, 34]]} />
    <Circles r={14} c={SKY} list={[[139, 57], [138, 103]]} />
    <Circles r={14} c={NAVY} list={[[33, 47], [33, 88], [85, 35], [85, 78]]} />
    <S d="M72 122Q85 106 98 122" c={SKY} w="3.500" />
  </>,
  <>
    <S d="M84 3V122" c="#e8e8e8" w="3" />
    <Circles r={11} c={PB} list={[[27, 30], [56, 42], [56, 105], [144, 34], [144, 54], [115, 87]]} />
    <Circles r={11} c={PSKY} list={[[27, 43], [56, 77], [27, 100], [115, 30], [144, 44], [144, 94], [115, 99]]} />
  </>,
  <>
    <S d="M13 51L36 60L68 35L94 51L121 74L153 68" c={PY} />
    <S d="M13 34L36 16L68 61L99 38L121 58L153 42" c={PO} />
    <S d="M13 75L36 98L85 71L121 94L153 87" c={PB} />
  </>,
  <>
    <S d="M84 3V122" c="#e8e8e8" w="3" />
    <S d="M11 51L32 55L50 35L72 36M95 50L113 29L128 43L155 35" c={PO} />
    <S d="M11 71L32 67L54 47L72 60M93 71L118 63L135 68L153 56" c={PY} />
    <S d="M11 92L34 98L50 80L72 80M95 91L116 80L130 89L155 80" c={PB} />
  </>,
  <>
    <S d={TICKS} c="#e3e3e3" w="2" />
    <S d="M27 44L54 19L80 41L97 31L127 50L145 34" c={PO} />
    <S d="M27 68L53 57L80 87L97 76L127 91L145 68" c={PB} />
  </>,
  <>
    <F d="M9 62L43 22L106 62L158 47V115H9Z" c={PB} />
    <F d="M9 72L43 47L106 86L158 56V115H9Z" c={PO} />
    <F d="M9 90L43 77L106 97L158 82V115H9Z" c={PY} />
  </>,
  <>
    <F d="M9 64L25 22L54 62L80 47V115H9ZM87 64L103 22L135 62L158 47V115H87Z" c={PB} />
    <F d="M9 80L25 47L54 86L80 62V115H9ZM87 80L103 47L135 86L158 62V115H87Z" c={PO} />
    <F d="M9 100L25 77L54 97L80 82V115H9ZM87 100L103 77L135 97L158 82V115H87Z" c={PY} />
  </>,
  <>
    <S d={TICKS} c="#e3e3e3" w="2" />
    <F d={box(30, 64, 14, 51) + box(54, 49, 14, 66) + box(78, 76, 14, 39) + box(102, 22, 14, 93) + box(126, 61, 14, 54)} c={PB} />
    <S d="M33 55L60 30L85 64L108 39L137 65" c={PO} />
  </>,
  <>
    <Circles r={11} c={PO} list={[[66, 35], [129, 41], [42, 65], [75, 77], [24, 101]]} />
    <S d={plus(106, 22, 13) + plus(94, 54, 13) + plus(139, 73, 13) + plus(52, 94, 13) + plus(106, 90, 13)} c="#c8e6db" w="3" />
  </>,
  <F d={box(18, 104, 12, 9) + box(33, 90, 12, 23) + box(48, 62, 12, 51) + box(63, 32, 12, 81) + box(78, 20, 12, 93) + box(93, 32, 12, 81) + box(108, 62, 12, 51) + box(123, 89, 12, 24) + box(138, 104, 12, 9)} c={PG} />,
  <>
    <F d={box(21, 53, 21, 12) + box(57, 38, 21, 27) + box(93, 47, 21, 24) + box(129, 32, 21, 36)} c={MG} />
    <F d={box(21, 65, 21, 24) + box(57, 65, 21, 15) + box(93, 71, 21, 24) + box(129, 68, 21, 15)} c={DG} />
    <S d="M31.500 30V100M24 31H39M24 100H39M67.500 24V106M60 25H75M60 106H75M103.500 21V109M96 22H111M96 109H111M139.500 15V112M132 16H147M132 112H147" c="#333" w="3" />
  </>,
  <>
    <F d={box(12, 12, 27, 24) + box(33, 48, 9, 24) + box(54, 48, 12, 24) + box(12, 87, 6, 24) + box(99, 87, 21, 24)} c={PG} />
    <F d={box(12, 48, 18, 24) + box(75, 48, 42, 24) + box(69, 87, 12, 24)} c="#def1e8" />
    <F d={box(60, 12, 12, 24) + box(108, 12, 6, 24) + box(132, 48, 24, 24) + box(54, 87, 9, 24)} c="#fbdcc0" />
    <F d={box(75, 12, 12, 24) + box(126, 12, 24, 24) + box(27, 87, 24, 24) + box(138, 87, 12, 24)} c="#feeada" />
  </>,
  <>
    <F d={box(15, 15, 120, 24) + box(15, 51, 138, 24) + box(15, 87, 102, 24)} c="#f6f6f6" />
    <F d={box(15, 21, 75, 12) + box(15, 57, 120, 12) + box(15, 93, 63, 12)} c={PG} />
    <S d="M100 15V39M121 51V75M139 87V111" c="#aaa" w="3" />
  </>,
  <>
    <Discs list={[[50, 39, 11], [78, 32, 15], [90, 98, 13]]} c={DG} />
    <Discs list={[[46, 82, 29], [107, 35, 9]]} c={MG} />
    <Discs list={[[136, 49, 20], [92, 65, 17]]} c={OR} />
    <Discs list={[[120, 81, 11]]} c={DOR} />
  </>,
];

/* ---------- data ---------- */
const MENU = [["File", 34], ["Data", 40], ["Worksheet", 72, -0.5], ["Dashboard", 73, -0.45], ["Story", 43], ["Analysis", 59], ["Map", 40, -0.1], ["Format", 54], ["Server", 48, -0.45], ["Window", 60], ["Help", 40]];
const DIMENSIONS = [["Area", "globe"], ["Location", "globe"], ["Staff Quarter", "hash"], ["Table Name", "globe"], ["Location Set", "set"], ["Measure Names", "abc"]];
const MEASURES = ["Price", "No. of Bedrooms", "Resale", "Maintenance Staff", "Gymnasium", "Swimming Pool", "Landscaped Gardens", "Jogging Track", "Rain Water Harvesting", "Indoor Games", "Shopping Mall", "Intercom", "Sports Facility", "ATM", "Club House", "School", "24X7Security"];
const ICONS = { globe: <Globe />, hash: <Hash />, set: <SetIcon />, abc: <AbcIcon>Abc</AbcIcon> };

const Field = ({ name, icon }) => (
  <FieldRow $italic={icon === "abc"}>
    <FieldIcon>{ICONS[icon]}</FieldIcon>
    {name}
  </FieldRow>
);

/* ---------- taskbar app icons ---------- */
const Opera = () => (
  <Art w={24} h={25}>
    <ellipse cx="36" cy="37" rx="32" ry="34" fill="#e01b2b" />
    <path d="M50 7A32 34 0 0 1 50 68Q62 56 62 37T50 7" fill="#a5101d" />
    <ellipse cx="36" cy="37" rx="14" ry="26" fill="#d3dde2" />
  </Art>
);
const Edge = () => (
  <Art w={25} h={25}>
    <circle cx="38" cy="37" r="35" fill="#1b7fd0" />
    <path d="M4 34A35 35 0 0 1 72 32Q72 50 54 50Q44 48 46 40Q44 24 26 26Q10 28 4 40Z" fill="#35c1d8" />
    <path d="M50 5Q72 12 73 34Q70 50 54 49Q66 30 50 5" fill="#5ed36a" />
    <path d="M24 44Q26 62 46 64Q60 64 66 56Q54 76 34 71Q14 62 24 44" fill="#0c59a4" />
    <path d="M34 36Q38 30 46 36Q42 46 54 50Q44 58 36 50Z" fill="#dfe8ec" />
    <circle cx="21" cy="56" r="17" fill="#8f8f8f" />
    <circle cx="21" cy="51" r="6" fill="#e5e5e5" />
    <path d="M10 67Q10 58 21 58T32 67Z" fill="#e5e5e5" />
  </Art>
);
const Explorer = () => (
  <Art w={22} h={20}>
    <path d="M1 2H26L31 8H62V30H1Z" fill="#d99b16" />
    <path d="M1 12H65V58H1Z" fill="#ffd667" />
    <path d="M11 58V37H55V58H46V46H20V58Z" fill="#3a8fd6" />
  </Art>
);
const Store = () => (
  <Art w={23} h={26}>
    <path d="M20 20V4H49V20" stroke="#222" strokeWidth="5" />
    <path d="M0 17H69V76H0Z" fill="#2b2b2b" />
    <path d="M21 35h12v12H21z" fill="#f25022" />
    <path d="M36 35h12v12H36z" fill="#7fba00" />
    <path d="M21 50h12v12H21z" fill="#00a4ef" />
    <path d="M36 50h12v12H36z" fill="#ffb900" />
  </Art>
);
const BadgeText = styled.text`
  font-size: 34px;
  font-weight: 600;
  fill: #222;
  text-anchor: middle;
`;
const WordLetter = styled.text`
  font-size: 42px;
  font-weight: 700;
  fill: #2461b8;
  text-anchor: middle;
`;
const Mail = () => (
  <Art w={34} h={28} transform="translate(4,2)">
    <path d="M0 28L35 1L70 28V36H0Z" fill="#1260a8" />
    <path d="M6 28H64L35 54Z" fill="#f5f5f5" />
    <path d="M0 28L35 50L70 28V74H0Z" fill="#1b93dd" />
    <circle cx="75" cy="59" r="23" fill="#c8d3d8" stroke="#777" strokeWidth="3" />
    <BadgeText x="75" y="71">1</BadgeText>
  </Art>
);
const Word = () => (
  <Art w={24} h={24}>
    <path d="M4 4H68V70H4Z" fill="#f7fafd" stroke="#4f7dc0" strokeWidth="4" />
    <path d="M50 16H64M50 26H64M50 36H64M12 60H60" stroke="#9bb4da" strokeWidth="3" />
    <WordLetter x="29" y="48">W</WordLetter>
  </Art>
);
const Chrome = () => (
  <Art w={26} h={28}>
    <circle cx="37" cy="38" r="36" fill="#2da94f" />
    <path d="M6 20A36 36 0 0 1 70 22H37Q26 24 22 46Z" fill="#e33b2e" />
    <path d="M70 22A36 36 0 0 1 37 74L53 45L50 24Z" fill="#fdd23c" />
    <circle cx="37" cy="38" r="17" fill="#fff" />
    <circle cx="37" cy="38" r="13" fill="#3b78e7" />
    <circle cx="56" cy="59" r="21" fill="#3a3a3a" />
    <path d="M48 46Q56 38 62 48L60 60L70 72Q56 84 44 74L52 62Z" fill="#d8d8d8" />
    <path d="M47 50Q56 34 64 52L66 66M48 50L44 66" stroke="#222" strokeWidth="5" />
  </Art>
);
const TableauTile = styled.span`
  padding: 2px;
  background: #f7f9fa;
  box-shadow: 1px 1px 2px #999;
`;

export default function App() {
  return (
    <Screen>
      <Global />
      <TitleBar>
        <AppIcon><TableauMark size={14} colors={BLUES} sw={4} /></AppIcon>
        <TitleText>Tableau - Number of Unique Visualizations</TitleText>
        <WindowButtons>
          <Art w={10} h={10} stroke="#000" strokeWidth="3"><path d="M0 16.500H30" /></Art>
          <Art w={11} h={11} stroke="#000" strokeWidth="3"><path d="M1.500 7.500H25.500V31.500H1.500ZM7.500 7V1.500H31.500V25.500H26" /></Art>
          <Art w={11} h={11} stroke="#000" strokeWidth="3"><path d="M1 1L32 32M32 1L1 32" /></Art>
        </WindowButtons>
      </TitleBar>
      <MenuBar>
        {MENU.map(([m, w, ls]) => <MenuItem key={m} $w={w} $ls={ls}>{m}</MenuItem>)}
      </MenuBar>
      <Toolbar>
        <Tool $w={17} $gap={15}><TableauMark size={17} colors={MULTI} /></Tool>
        <Divider $gap={15} />
        <Tool $w={16} $gap={14}><Arrow c="#555" /></Tool>
        <Tool $w={16} $gap={16}><Arrow c={L} flip /></Tool>
        <Tool $w={19} $gap={13}><Replay /></Tool>
        <Caret gap={8} c={L} />
        <Tool $w={16} $gap={11}><Save /></Tool>
        <Tool $w={15} $gap={16}><AddData /></Tool>
        <Tool $w={14} $gap={16}><PauseData /></Tool>
        <Caret gap={11} />
        <Tool $w={17} $gap={8}><Refresh /></Tool>
        <Caret gap={10} c={L} />
        <Divider $gap={10} />
        <Tool $w={19} $gap={11}><NewSheet /></Tool>
        <Caret gap={8} />
        <Tool $w={17} $gap={10}><Duplicate /></Tool>
        <Tool $w={19} $gap={13}><NewSheet del /></Tool>
        <Caret gap={8} />
        <Divider $gap={10} />
        <Tool $w={18} $gap={12}><Swap /></Tool>
        <Tool $w={18} $gap={15}><SortIcon /></Tool>
        <Tool $w={18} $gap={14}><SortIcon desc /></Tool>
        <Divider $gap={14} />
        <Tool $w={14} $gap={15}><Highlighter /></Tool>
        <Caret gap={8} />
        <Tool $w={13} $gap={11}><Clip /></Tool>
        <Caret gap={11} c={L} />
        <ActiveTool $w={30} $gap={5}><TextBox /></ActiveTool>
        <Tool $w={13} $gap={8}><Pin /></Tool>
        <FitSelect>
          <FitLabel>Standard</FitLabel>
          <FitArrow><Caret s={7} /></FitArrow>
        </FitSelect>
        <Divider $gap={15} />
        <Tool $w={20} $gap={12}><FitChart /></Tool>
        <Caret gap={5} />
        <Tool $w={17} $gap={11}><Present /></Tool>
        <Divider $gap={15} />
        <Tool $w={15} $gap={15}><Share /></Tool>
        <Tool $w={18} $gap={286}><Sign /></Tool>
      </Toolbar>

      <Body>
        <DataPane>
          <PaneTabs>
            <DataTab>Data</DataTab>
            <AnalyticsTab>Analytics<TabArrow><Chevron d="left" w={14} s={1.2} /></TabArrow></AnalyticsTab>
          </PaneTabs>
          <SourceRow><SourceIcon />Bangalore</SourceRow>
          <SearchRow>
            <SearchField>Search<Lens /></SearchField>
            <Tool $w={13} $gap={4}><Funnel /></Tool>
            <SmallDivider />
            <Rows4 />
            <Caret gap={8} s={7} />
          </SearchRow>
          <TablesTitle>Tables</TablesTitle>
          <FieldArea>
            <FieldList>
              {DIMENSIONS.map(([n, i]) => <Field key={n} name={n} icon={i} />)}
              <FieldRule />
              {MEASURES.map((n) => <Field key={n} name={n} icon="hash" />)}
            </FieldList>
            <VScroll>
              <ScrollButton><Chevron d="up" w={10} s={2.4} /></ScrollButton>
              <VThumb />
              <Spacer />
              <ScrollButton><Chevron d="down" w={10} s={2.4} /></ScrollButton>
            </VScroll>
          </FieldArea>
        </DataPane>

        <CardColumn>
          <Card $h={62}><CardTitle>Pages</CardTitle></Card>
          <Card $h={78}>
            <CardTitle>Filters</CardTitle>
            <FilterPill $w={116} $pl={11}>Location</FilterPill>
          </Card>
          <Card $h={287}>
            <CardTitle>Marks</CardTitle>
            <MarkType>
              <MarkSquare />Automatic<Spacer />
              <MarkArrow><Caret s={7} /></MarkArrow>
            </MarkType>
            <MarkGrid>
              <MarkButton><Dots4 />Color</MarkButton>
              <MarkButton><SizeIcon />Size</MarkButton>
              <MarkButton><TextBox s={15} c={G} />Label</MarkButton>
              <MarkButton><Art w={1} h={1} /><DetailIcon />Detail</MarkButton>
              <MarkButton><TooltipIcon />Tooltip</MarkButton>
            </MarkGrid>
            <PillList>
              <PillRow><PillIcon><Dots4 /></PillIcon><Pill $w={83} $green>SUM(Vaa..</Pill></PillRow>
              <PillRow><PillIcon><SizeIcon /></PillIcon><Pill $w={83} $green>SUM(Vaa..</Pill></PillRow>
              <PillRow><PillIcon><DetailIcon /></PillIcon><Pill $w={83} $ls={0.4}>ATTR(Loc..</Pill></PillRow>
              <PillRow><PillIcon><TextBox s={14} c={G} /></PillIcon><Pill $w={83}>Location</Pill></PillRow>
            </PillList>
          </Card>
        </CardColumn>

        <Work>
          <Shelf><ShelfName $pl={7}><ColumnsIcon />Columns</ShelfName></Shelf>
          <Shelf><ShelfName $pl={6}><RowsIcon />Rows</ShelfName></Shelf>
          <SheetRow>
            <Sheet>
              <SheetTitle>Vastu-complains based on location</SheetTitle>
              <ChartBox><Treemap /></ChartBox>
              <HScroll>
                <ScrollButton><Chevron d="left" w={10} s={2.4} /></ScrollButton>
                <HThumb />
                <Spacer />
                <ScrollButton><Chevron d="right" w={10} s={2.4} /></ScrollButton>
              </HScroll>
              <HintBox>
                <span>Location:</span><HintValue>Delhi</HintValue>
                <span>Location:</span><HintValue>Delhi</HintValue>
                <span>Vaastu Compliant:</span><HintValue>531</HintValue>
              </HintBox>
            </Sheet>
            <Legend>SUM(Vaastu C..<LegendRamp />0</Legend>
          </SheetRow>
        </Work>
      </Body>

      <SheetTabs>
        <SheetTab $w={131} $pl={9} $ls={0}>
          <Art w={10} h={12} stroke={G} strokeWidth="3"><path d="M2 6Q2 2 14 2T26 6Q26 11 14 11T2 6V28Q2 33 14 33T26 28V6" /></Art>
          Data Source
        </SheetTab>
        <SheetTab $w={201}>Latitude and Longitude based o...</SheetTab>
        <SheetTab $w={200} $pl={5} $ls={-0.2}>No of houses based on area in sqf</SheetTab>
        <SheetTab $w={200} $pl={5} $ls={-0.17}>Houses price based on rainwate...</SheetTab>
        <SheetTab $w={200} $pl={5} $on $ls={-0.2}>Vastu-complains based on loca...</SheetTab>
        <SheetTab $w={200} $pl={5} $ls={-0.17}>House price based on Nomber o...</SheetTab>
        <SheetTab $w={138} $pl={5}>Hospital and Schools ne</SheetTab>
        <SheetTab $w={32} $pl={9}>
          <Art w={16} h={15} stroke={G} strokeWidth="3"><path d="M34 22V3H2V33H24M10 27V20M17 27V11M25 27V16" /><path d="M25 35H45M35 25V45" strokeWidth="5" /></Art>
        </SheetTab>
        <SheetTab $w={32} $pl={9}>
          <Art w={16} h={15} stroke={G} strokeWidth="3"><path d="M34 22V3H2V33H24M17 3V33M2 18H34" /><path d="M25 35H45M35 25V45" strokeWidth="5" /></Art>
        </SheetTab>
        <SheetTab $w={33} $pl={9}>
          <Art w={16} h={15} stroke={G} strokeWidth="3"><path d="M18 8L2 3V30L18 36V8L34 3V22" /><path d="M25 35H45M35 25V45" strokeWidth="5" /></Art>
        </SheetTab>
      </SheetTabs>
      <StatusBar>
        <StatusText $w={75} $ls={-0.15}>1776 marks</StatusText>
        <StatusText $w={106} $ls={-0.32}>1 row by 1 column</StatusText>
        <StatusText $w={815} $ls={0.13}>SUM(Vaastu Compliant): 208,837</StatusText>
        <StatusCell $w={127} />
        <StatusCell $w={27} />
        <StatusCell $w={27} />
        <StatusCell $w={47} />
        <StatusCell $w={71} $j="space-between" $p={8}>
          <Art w={7} h={7}><path d="M0 0h3v21H0zM18 0v21L5 10.500z" fill={G} /></Art>
          <Art w={5} h={7}><path d="M13 0v21L1 10.500z" fill={G} /></Art>
          <Art w={5} h={7}><path d="M1 0v21L13 10.500z" fill={G} /></Art>
          <Art w={7} h={7}><path d="M17 0h3v21h-3zM1 0v21L15 10.500z" fill={G} /></Art>
        </StatusCell>
        <StatusCell $w={68} $j="space-between" $p={8}>
          <Art w={11} h={11} stroke="#bbb" strokeWidth="9"><path d="M0 5H33M0 17H33M0 29H33" strokeDasharray="9 3" /></Art>
          <Art w={11} h={11}><path d="M0 0h33v18H0zM0 24h9v9H0zM12 24h9v9h-9zM24 24h9v9h-9z" fill="#bbb" /></Art>
          <Art w={11} h={11}><path d="M0 0h33v33H0z" fill="#666" /></Art>
        </StatusCell>
      </StatusBar>

      <Taskbar>
        <StartButton>
          <Art w={16} h={16}><path d="M0 7L20 4V23H0ZM23 4L48 0V23H23ZM0 26H20V45L0 42ZM23 26H48V48L23 45Z" fill="#000" /></Art>
        </StartButton>
        <TaskSearch><Lens s={17} c="#222" w={2.2} />Type here to search</TaskSearch>
        <AppButton $shift={2}>
          <Art w={16} h={16} stroke="#111" strokeWidth="7"><circle cx="24" cy="24" r="20" /></Art>
        </AppButton>
        <AppButton $shift={4}>
          <Art w={17} h={16} stroke="#111" strokeWidth="3"><path d="M2 2V10H34V2M5 14H31V32H5ZM2 46V37H34V46M44 2V10M44 24V46" /><path d="M40 14h9v8h-9z" fill="#111" stroke="none" /></Art>
        </AppButton>
        <AppButton><Opera /></AppButton>
        <AppButton><Edge /></AppButton>
        <OpenApp $open><Explorer /></OpenApp>
        <AppButton><Store /></AppButton>
        <AppButton><Mail /></AppButton>
        <AppButton $shift={2}><Word /></AppButton>
        <OpenApp $open><Chrome /></OpenApp>
        <AppButton $open $active><TableauTile><TableauMark size={18} colors={BLUES} sw={2.5} /></TableauTile></AppButton>
        <Tray>
          <TrayItem $w={24}><Chevron d="up" w={16} s={1} c="#111" /></TrayItem>
          <TrayItem $w={25}>
            <Art w={14} h={13} stroke="#222" strokeWidth="3"><path d="M3 38A34 34 0 0 1 38 4M12 38A26 26 0 0 1 38 13M20 38A17 17 0 0 1 38 22M29 38A9 9 0 0 1 38 30" /><circle cx="36" cy="36" r="3" fill="#222" /></Art>
          </TrayItem>
          <TrayItem $w={23}>
            <Art w={16} h={16}><circle cx="24" cy="24" r="23" fill="#fdd22a" /><path d="M2 34Q24 34 46 18A23 23 0 0 1 8 41Z" fill="#7bc043" /><circle cx="24" cy="24" r="13" fill="#ffe14a" /><path d="M16 24H32M24 16V32" stroke="#1f8a3c" strokeWidth="6" /></Art>
          </TrayItem>
          <TrayItem $w={25}>
            <Art w={15} h={9} stroke="#111" strokeWidth="3"><path d="M2 2H38V25H2Z" /><path d="M7 7H24V20H7Z" fill="#111" stroke="none" /><path d="M42 8V19" strokeWidth="5" /></Art>
          </TrayItem>
          <TrayItem $w={24}>
            <Art w={17} h={14} stroke="#111" strokeWidth="3"><path d="M2 14H9L19 4V38L9 28H2ZM25 15Q29 21 25 27M32 10Q39 21 32 32M40 6Q49 21 40 36" /></Art>
          </TrayItem>
          <TrayText $w={35}>ENG<br />IN</TrayText>
          <TrayText $w={66}>11:33 AM<br />10/10/2023</TrayText>
          <TrayItem $w={47}>
            <Art w={24} h={24} transform="translate(0,3)">
              <path d="M0 0H48V36H16L8 44V36H0Z" fill="#111" />
              <path d="M8 9H40M8 18H40M8 27H28" stroke="#fff" strokeWidth="3" />
              <circle cx="47" cy="47" r="23" fill="#dcd7d7" stroke="#777" strokeWidth="2.500" />
              <BadgeText x="47" y="59">6</BadgeText>
            </Art>
          </TrayItem>
          <PeekEdge />
        </Tray>
      </Taskbar>

      <ShowMe>
        <ShowMeTab><ShowMeLogo />Show Me</ShowMeTab>
        <ShowMeBody>
          <ThumbGrid>
            {THUMBS.map((t, i) => (
              <Thumb key={i} $on={i === 3}><Art w={56} h={42}>{t}</Art></Thumb>
            ))}
          </ThumbGrid>
          <Needs>
            <NeedsLine $h={17}>For<b>symbol maps</b>try</NeedsLine>
            <NeedsLine $h={34} $gap={7} $ls={-0.5}><NeedsText>1 geo</NeedsText><Globe c="#555" s={11} /><Pill $w={84} $pl={10} $ls={0.1}>Dimension</Pill></NeedsLine>
            <NeedsLine $h={22} $gap={2}><NeedsText>0 or more</NeedsText><Pill $w={90} $pl={10}>Dimensions</Pill></NeedsLine>
            <NeedsLine $h={34} $gap={3}><NeedsText>0 to 2</NeedsText><Pill $w={79} $pl={10} $green>Measures</Pill></NeedsLine>
            <NeedsNote>May use spatial measure in<br />place of geo dimension</NeedsNote>
          </Needs>
        </ShowMeBody>
      </ShowMe>

      <Watermark>
        <WatermarkTitle>Activate Windows</WatermarkTitle>
        Go to Settings to activate Windows.
      </Watermark>
    </Screen>
  );
}
